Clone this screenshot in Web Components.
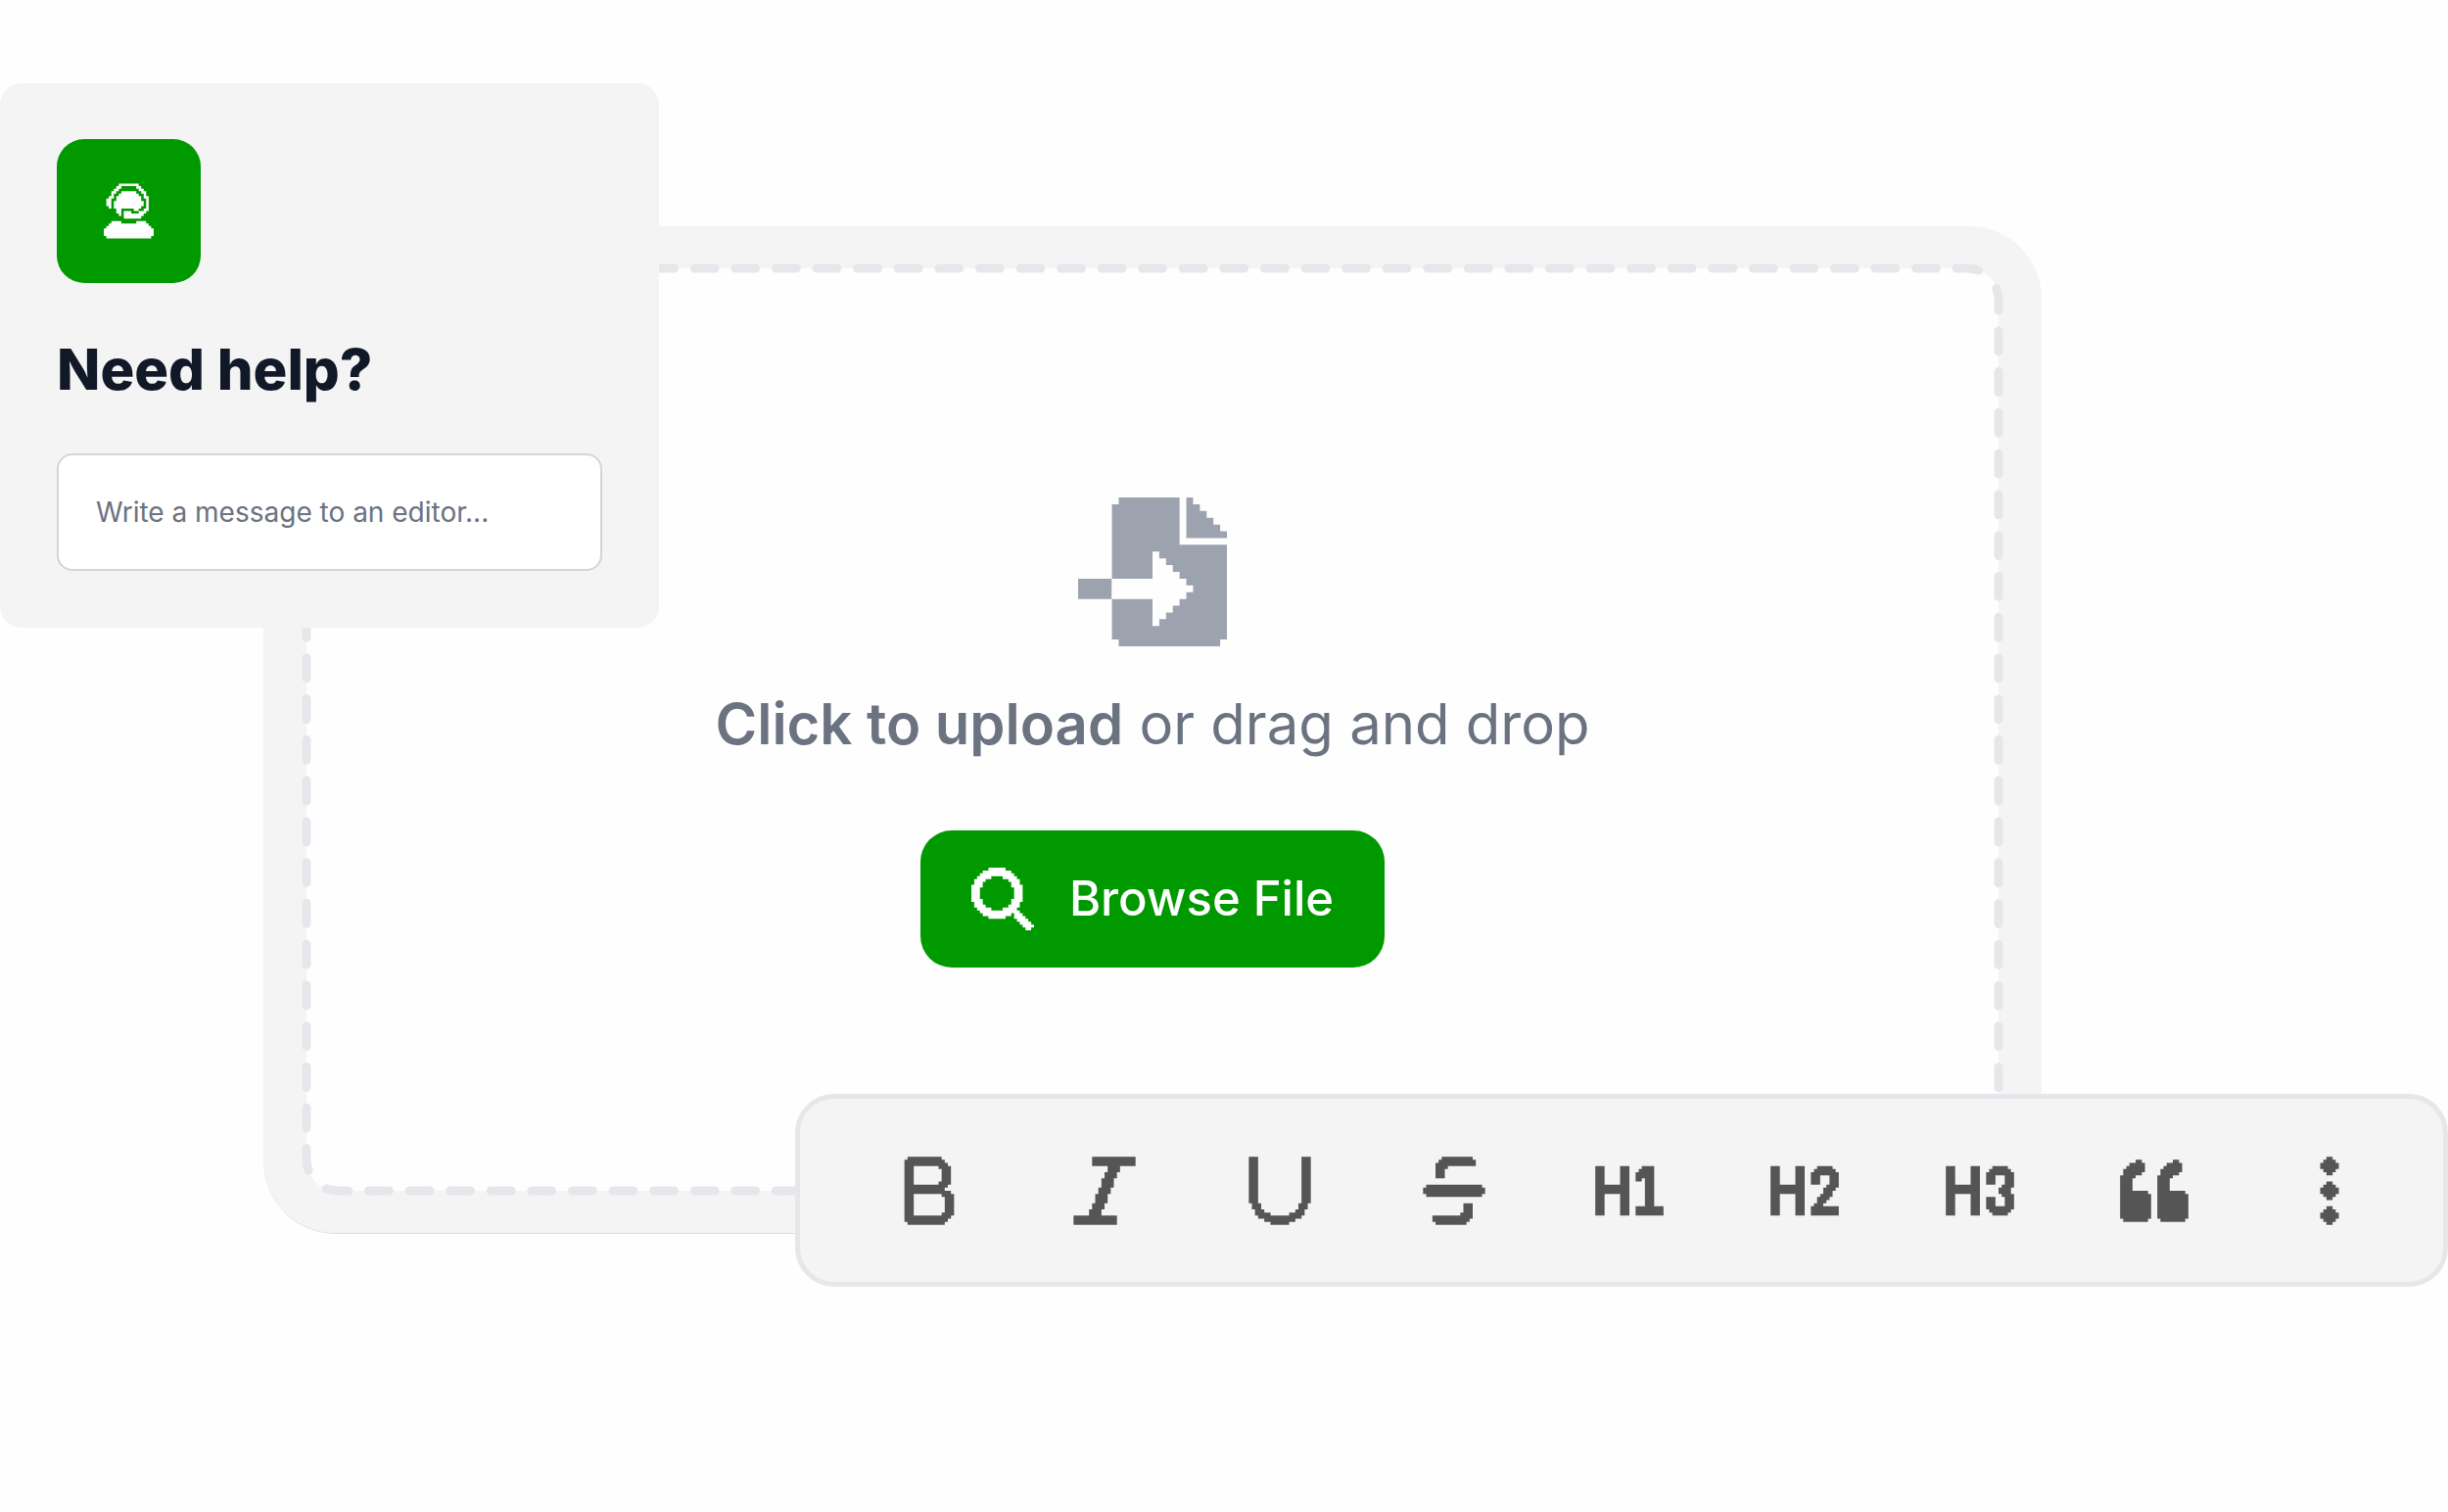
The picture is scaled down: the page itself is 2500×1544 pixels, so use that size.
<!DOCTYPE html>
<html lang="en">
<head>
<meta charset="utf-8">
<title>Editor upload</title>
<style>
  body { margin: 0; background: #fefefe; font-family: Inter, "Liberation Sans", sans-serif; color: #6b7280; }
</style>
</head>
<body>
<editor-stage>
  <help-card slot="help" heading="Need help?"></help-card>
  <upload-zone>
    <strong slot="action">Click to upload</strong>
    <span slot="hint">or drag and drop</span>
    <browse-button slot="button">Browse File</browse-button>
  </upload-zone>
  <format-toolbar slot="toolbar"></format-toolbar>
</editor-stage>

<script>
const quote = "M6 2H8V3H9V6H8V7H6V8H5V12H10V13H11V21H10V22H2V21H1V7H2V5H3V4H4V3H6Z";
const quoteRight = "M18 2H20V3H21V6H20V7H18V8H17V12H22V13H23V21H22V22H14V21H13V7H14V5H15V4H16V3H18Z";
const hStem = "M1 4H4V10H9V4H12V20H9V13H4V20H1Z";
const dot = y => `M11 ${y}h2v1h1v1h1v2h-1v1h-1v1h-2v-1h-1v-1h-1v-2h1v-1h1z`;

const ICONS = {
  bold: [24, "M5 1H16V2H17V3H18V4H19V10H18V11H17V12H19V13H20V20H19V21H18V22H17V23H5V22H4V2H5ZM7 4V10H15V9H16V5H15V4ZM7 13V20H16V19H17V14H16V13Z"],
  italic: [24, "M8 1H22V4H17V6H16V8H15V11H14V13H13V16H12V18H11V20H16V23H2V20H7V18H8V16H9V13H10V11H11V8H12V6H13V4H8Z"],
  underline: [24, "M2 1H5V16H6V18H7V19H9V20H15V19H17V18H18V16H19V1H22V16H21V18H20V20H19V21H17V22H15V23H9V22H7V21H5V20H4V18H3V16H2Z"],
  strike: [24, "M8 1H18V2H19V4H10V5H9V8H6V3H7V2H8ZM3 10H21V11H22V13H21V14H3V13H2V11H3ZM15 16H18V21H17V22H16V23H6V22H5V20H14V19H15Z"],
  h1: [24, hStem + "M16 4H20V17H23V20H14V17H17V8H16V9H14V6H15V5H16Z"],
  h2: [24, hStem + "M16 4H21V5H22V6H23V11H22V12H21V14H20V15H19V16H18V17H23V20H14V17H15V16H16V14H17V13H18V11H19V10H20V7H17V10H14V6H15V5H16Z"],
  h3: [24, hStem + "M16 4H21V5H22V6H23V11H22V13H23V18H22V19H21V20H16V19H15V18H14V14H17V17H20V14H19V13H18V11H19V10H20V7H17V10H14V6H15V5H16Z"],
  quote: [24, quote + quoteRight],
  more: [24, dot(1) + dot(9) + dot(17)],
  upload: [22, "M6 0H15V7H22V21H21V22H6V21H5V15H11V19H12V18H13V17H14V16H15V15H16V14H17V13H16V12H15V11H14V10H13V9H12V8H11V12H5V1H6ZM0 12H4.95V15H0ZM16 0H17V1H18V2H19V3H20V4H21V5H22V6H16Z"],
  search: [22, "M6 0H12V1H14V2H15V3H16V4H17V6H18V12H17V14H16V15H17V16H18V17H19V18H20V19H21V20H22V21H21V22H19V21H18V20H17V19H16V18H15V16H14V17H12V18H6V17H4V16H3V15H2V14H1V12H0V6H1V4H2V3H3V2H4V1H6ZM7 3V4H5V5H4V7H3V11H4V13H5V14H7V15H11V14H13V13H14V11H15V7H14V5H13V4H11V3Z"],
  support: [24, "M8 1H16V2H17V3H18V4H19V6H20V12H19V13H18V14H17V15H10V12H13V13H16V12H18V11H19V7H18V5H17V4H16V3H15V2H9V3H8V4H7V5H6V7H5V11H4V10H3V7H4V6H5V4H6V3H7V2H8ZM9 4H15V5H16V6H17V8H18V10H17V11H16V12H14V11H9V14H8V13H7V11H6V8H7V6H8V5H9ZM5 16H9V17H15V16H19V17H20V18H21V19H22V22H21V23H3V22H2V19H3V18H4V17H5Z"]
};

customElements.define("pixel-icon", class extends HTMLElement {
  connectedCallback() {
    const [grid, d] = ICONS[this.getAttribute("name")];
    this.attachShadow({ mode: "open" }).innerHTML = `
      <style>
        :host { display: block; flex: none; width: var(--icon-size, 76px); height: var(--icon-size, 76px); }
        svg { display: block; width: 100%; height: 100%; fill: currentColor; }
      </style>
      <svg viewBox="0 0 ${grid} ${grid}" aria-hidden="true"><path fill-rule="evenodd" d="${d}"/></svg>`;
  }
});

customElements.define("help-card", class extends HTMLElement {
  connectedCallback() {
    this.attachShadow({ mode: "open" }).innerHTML = `
      <style>
        :host { display: flex; flex-direction: column; align-items: flex-start; box-sizing: border-box;
          padding: 57px 58px 58px; background: #f4f4f4; border-radius: 22px; }
        .tile { display: grid; place-items: center; width: 147px; height: 147px; border-radius: 28px;
          background: #009900; color: #fff; --icon-size: 61px; }
        h2 { margin: 52px 0 50px; font-size: 58px; line-height: 72px; font-weight: 800; color: #111827; }
        input { box-sizing: border-box; width: 100%; height: 120px; padding: 0 38px; border: 2px solid #d1d5db;
          border-radius: 16px; background: #fff; font: 400 28px/40px Inter, "Liberation Sans", sans-serif; color: #111827; }
        input::placeholder { color: #6b7280; opacity: 1; }
      </style>
      <div class="tile"><pixel-icon name="support"></pixel-icon></div>
      <h2>${this.getAttribute("heading")}</h2>
      <input id="message" type="text" aria-label="Message" placeholder="Write a message to an editor...">`;
  }
});

customElements.define("browse-button", class extends HTMLElement {
  connectedCallback() {
    this.attachShadow({ mode: "open" }).innerHTML = `
      <style>
        :host { display: block; --icon-size: 64px; }
        button { display: flex; align-items: center; gap: 36px; height: 140px; padding: 0 52px; border: 0;
          border-radius: 32px; background: #009900; color: #fff; cursor: pointer;
          font: 500 49px/60px Inter, "Liberation Sans", sans-serif; }
      </style>
      <button type="button"><pixel-icon name="search"></pixel-icon><slot></slot></button>`;
  }
});

customElements.define("upload-zone", class extends HTMLElement {
  connectedCallback() {
    const root = this.attachShadow({ mode: "open" });
    root.innerHTML = `
      <style>
        :host { display: grid; box-sizing: border-box; border: solid #f4f4f4; border-width: 43px 44px; border-radius: 74px;
          box-shadow: 0 1px 0 #dcdcdc; }
        .dashes, .content { grid-area: 1 / 1; }
        .dashes { width: 100%; height: 100%; overflow: visible; fill: none; stroke: #e5e7eb; stroke-width: 9; stroke-linecap: round; }
        .content { display: flex; flex-direction: column; align-items: center; padding: 234px 0 228px; }
        .content > pixel-icon { --icon-size: 152px; color: #9ca3af; }
        p { margin: 43px 0 73px; font-size: 58px; line-height: 72px; font-weight: 400; color: #6b7280; }
        ::slotted(strong) { font-weight: 600; }
      </style>
      <svg class="dashes" aria-hidden="true"></svg>
      <div class="content">
        <pixel-icon name="upload"></pixel-icon>
        <p><slot name="action"></slot> <slot name="hint"></slot></p>
        <slot name="button"></slot>
      </div>`;
    this.drawDashes();
    new ResizeObserver(() => this.drawDashes()).observe(this);
  }

  // Each side runs from the middle of one corner to the middle of the next, so that the dashes mirror at every corner.
  drawDashes() {
    const svg = this.shadowRoot.querySelector(".dashes");
    const w = this.clientWidth, h = this.clientHeight;
    const r = 32, m = r * (1 - Math.SQRT1_2), cornerGap = 13.5, cornerDash = 22.5;
    const side = (length, d) => {
      const middle = length - 2 * r + Math.PI * r / 2 - 2 * (cornerGap + cornerDash);
      const count = Math.round((middle / 21 - 1) / 2);
      const step = middle / (2 * count + 1);
      const dashes = [0, cornerGap, cornerDash, ...Array(2 * count + 1).fill(step), cornerDash, cornerGap * 2];
      return `<path d="${d}" stroke-dasharray="${dashes.join(" ")}"/>`;
    };
    const arc = (x, y) => `A${r} ${r} 0 0 1 ${x} ${y}`;
    svg.innerHTML =
      side(w, `M${m} ${m}${arc(r, 0)}H${w - r}${arc(w - m, m)}`) +
      side(h, `M${w - m} ${m}${arc(w, r)}V${h - r}${arc(w - m, h - m)}`) +
      side(w, `M${w - m} ${h - m}${arc(w - r, h)}H${r}${arc(m, h - m)}`) +
      side(h, `M${m} ${h - m}${arc(0, h - r)}V${r}${arc(m, m)}`);
    // A zero-length first dash would leave a round cap on the corner itself, so the pattern starts just past it.
    svg.querySelectorAll("path").forEach(p => p.setAttribute("stroke-dashoffset", "0.01"));
  }
});

customElements.define("format-toolbar", class extends HTMLElement {
  connectedCallback() {
    const tools = [["bold", "Bold"], ["italic", "Italic"], ["underline", "Underline"], ["strike", "Strikethrough"],
      ["h1", "Heading 1"], ["h2", "Heading 2"], ["h3", "Heading 3"], ["quote", "Quote"], ["more", "More"]];
    this.attachShadow({ mode: "open" }).innerHTML = `
      <style>
        :host { display: flex; justify-content: space-between; align-items: center; box-sizing: border-box;
          padding: 56px 78px 55px 94px; border: 5px solid #e5e7eb; border-radius: 40px; background: #f4f4f4; }
        button { display: block; padding: 0; border: 0; background: none; color: #555; cursor: pointer; }
      </style>
      ${tools.map(([icon, label]) => `<button type="button" aria-label="${label}"><pixel-icon name="${icon}"></pixel-icon></button>`).join("")}`;
    this.setAttribute("role", "toolbar");
  }
});

customElements.define("editor-stage", class extends HTMLElement {
  connectedCallback() {
    this.attachShadow({ mode: "open" }).innerHTML = `
      <style>
        :host { display: block; position: relative; box-sizing: border-box; padding: 231px 415px 55px 269px; }
        ::slotted(help-card) { position: absolute; z-index: 1; top: 85px; left: 0; width: 673px; }
        ::slotted(format-toolbar) { position: absolute; z-index: 1; bottom: 0; right: 0; left: 812px; }
      </style>
      <slot></slot><slot name="help"></slot><slot name="toolbar"></slot>`;
  }
});
</script>
</body>
</html>
